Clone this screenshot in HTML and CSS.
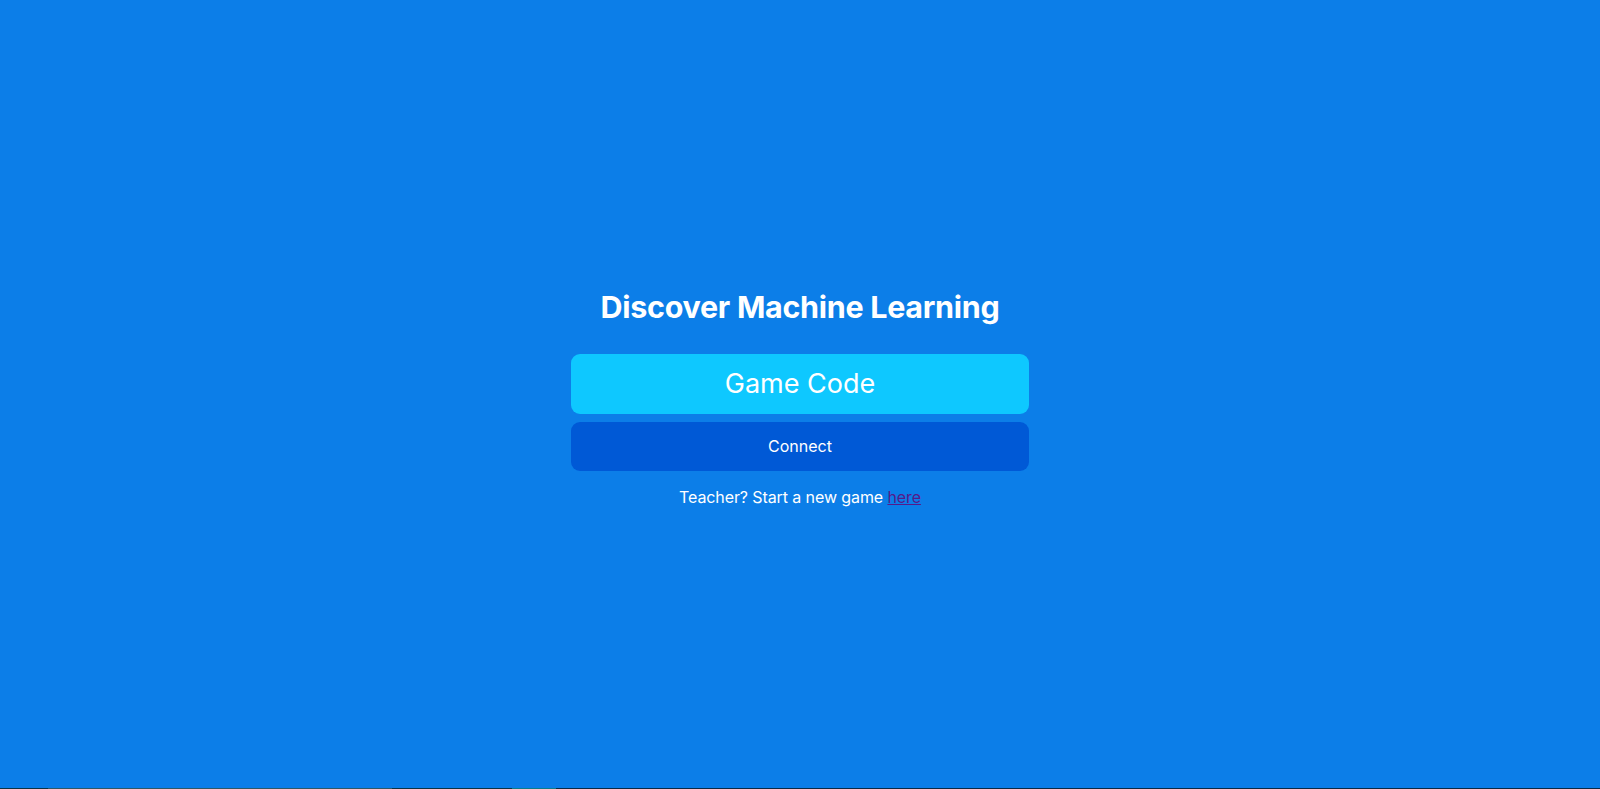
FILE: index.html
```html
<!DOCTYPE html>
<html lang="en">
<head>
<meta charset="utf-8">
<title>Discover Machine Learning</title>
<link rel="stylesheet" href="styles.css">
</head>
<body>
<main class="page">
  <div class="join">
    <h1 class="title">Discover Machine Learning</h1>
    <input class="code-input" type="text" placeholder="Game Code">
    <button class="connect" type="button">Connect</button>
    <p class="teacher">Teacher? Start a new game <a class="teacher-link" href="#">here</a></p>
  </div>
</main>
<div class="edge">
  <span class="seg seg-a"></span>
  <span class="seg seg-b"></span>
  <span class="seg seg-c"></span>
  <span class="seg seg-d"></span>
  <span class="seg seg-e"></span>
</div>
</body>
</html>
```
FILE: styles.css
```css
html, body {
  margin: 0;
  padding: 0;
  background: #0c7ee8;
  overflow: hidden;
}
body {
  font-family: Inter, "Noto Sans", "Liberation Sans", sans-serif;
  color: #ffffff;
}
.page {
  height: 788px;
  display: flex;
  align-items: center;
  justify-content: center;
}
.join {
  width: 458px;
  display: flex;
  flex-direction: column;
  align-items: stretch;
  padding-top: 4px;
}
.title {
  margin: 0 0 26px;
  text-align: center;
  font-size: 30.5px;
  font-weight: 700;
  line-height: 42px;
  letter-spacing: -0.3px;
}
.code-input {
  box-sizing: border-box;
  height: 60px;
  border: none;
  border-radius: 9px;
  background: #0ec8ff;
  color: #ffffff;
  font-family: inherit;
  font-size: 27px;
  text-align: center;
  outline: none;
  padding: 0;
}
.code-input::placeholder {
  color: #ffffff;
  opacity: 1;
}
.connect {
  margin-top: 8px;
  height: 49px;
  border: none;
  border-radius: 9px;
  background: #0059d6;
  color: #ffffff;
  font-family: inherit;
  font-size: 16px;
  padding: 0;
}
.teacher {
  margin: 16px 0 0;
  text-align: center;
  font-size: 16px;
  line-height: 20px;
  letter-spacing: -0.1px;
}
.teacher-link {
  color: #551a8b;
}
.edge {
  display: flex;
  height: 1px;
  background: #0a2a45;
}
.seg { display: block; height: 1px; }
.seg-a { width: 48px; background: #0b3344; }
.seg-b { width: 344px; background: #2f5866; }
.seg-c { width: 120px; background: #0b3344; }
.seg-d { width: 44px; background: #0b7d8c; }
.seg-e { flex: 1; background: #0a2a45; }
```
